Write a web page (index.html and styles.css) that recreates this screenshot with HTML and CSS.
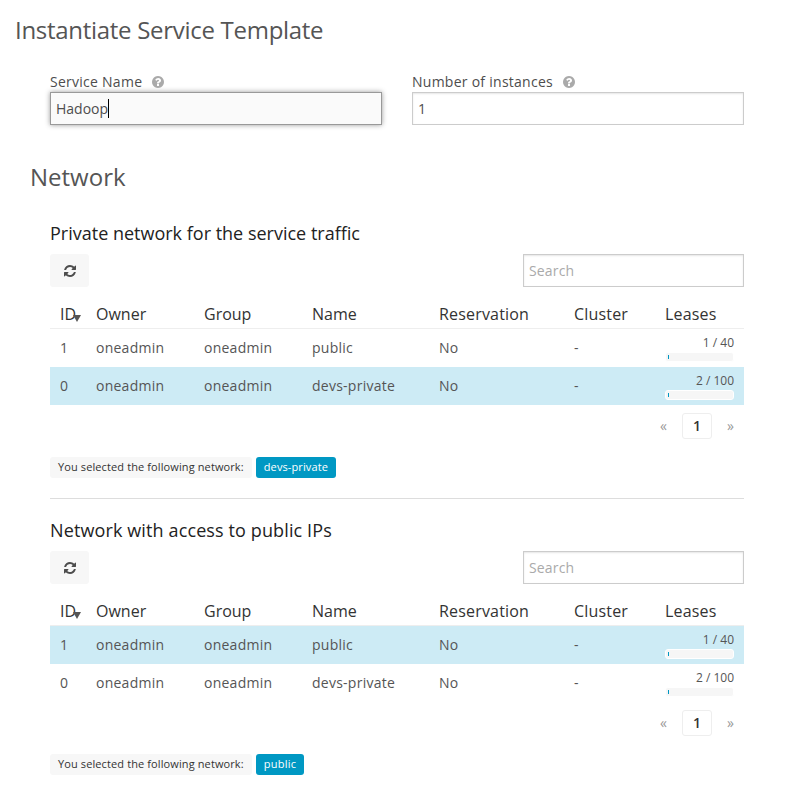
FILE: index.html
```html
<!DOCTYPE html>
<html lang="en">
<head>
<meta charset="utf-8">
<title>Instantiate Service Template</title>
<link rel="stylesheet" href="styles.css">
</head>
<body>
<svg class="sprite" aria-hidden="true">
  <symbol id="refresh" viewBox="0 0 1536 1536"><path d="M1511 928q0 5-1 7-64 268-268 434.500t-478 166.500q-146 0-282.500-55t-243.500-157l-129 129q-19 19-45 19t-45-19-19-45v-448q0-26 19-45t45-19h448q26 0 45 19t19 45-19 45l-137 137q71 66 161 102t187 36q134 0 250-65t186-179q11-17 53-117 8-23 30-23h192q13 0 22.500 9.500t9.500 22.500zm25-800v448q0 26-19 45t-45 19h-448q-26 0-45-19t-19-45 19-45l138-138q-148-137-349-137-134 0-250 65t-186 179q-11 17-53 117-8 23-30 23h-199q-13 0-22.500-9.500t-9.500-22.500v-7q65-268 270-434.500t480-166.500q146 0 284 55.500t245 156.500l130-129q19-19 45-19t45 19 19 45z"/></symbol>
  <symbol id="help" viewBox="128 128 1536 1536"><path d="M1024 1376v-192q0-14-9-23t-23-9h-192q-14 0-23 9t-9 23v192q0 14 9 23t23 9h192q14 0 23-9t9-23zm256-672q0-88-55.500-163t-138.500-116-170-41q-243 0-371 213-15 24 8 42l132 100q7 6 19 6 16 0 25-12 53-68 86-92 34-24 86-24 48 0 85.500 26t37.500 59q0 38-20 61t-68 45q-63 28-115.500 86.500t-52.500 125.500v36q0 14 9 23t23 9h192q14 0 23-9t9-23q0-19 21.500-49.500t54.500-49.500q32-18 49-28.500t46-35 44.500-48 28-60.500 12.500-81zm384 192q0 209-103 385.500t-279.500 279.500-385.500 103-385.500-103-279.500-279.500-103-385.500 103-385.500 279.500-279.500 385.500-103 385.500 103 279.500 279.500 103 385.500z"/></symbol>
</svg>
<h1>Instantiate Service Template</h1>
<form class="fields">
  <div class="field">
    <div class="label">Service Name <svg><use href="#help"/></svg></div>
    <div class="input focused"><span>Hadoop</span><i class="caret"></i></div>
  </div>
  <div class="field">
    <div class="label">Number of instances <svg><use href="#help"/></svg></div>
    <div class="input">1</div>
  </div>
</form>
<h2>Network</h2>
<section>
  <h3>Private network for the service traffic</h3>
  <div class="toolbar">
    <button type="button"><svg><use href="#refresh"/></svg></button>
    <div class="input search">Search</div>
  </div>
  <table>
    <thead><tr><th class="id">ID<i class="sort"></i></th><th class="owner">Owner</th><th class="group">Group</th><th class="name">Name</th><th class="res">Reservation</th><th class="cluster">Cluster</th><th>Leases</th></tr></thead>
    <tbody>
      <tr><td>1</td><td>oneadmin</td><td>oneadmin</td><td>public</td><td>No</td><td>-</td><td class="leases"><div>1 / 40</div><div class="bar"><i></i></div></td></tr>
      <tr class="selected"><td>0</td><td>oneadmin</td><td>oneadmin</td><td>devs-private</td><td>No</td><td>-</td><td class="leases"><div>2 / 100</div><div class="bar"><i></i></div></td></tr>
    </tbody>
  </table>
  <div class="pager"><span>«</span><b>1</b><span>»</span></div>
  <div class="selection"><span class="tag">You selected the following network:</span><span class="tag picked">devs-private</span></div>
</section>
<section class="divided">
  <h3>Network with access to public IPs</h3>
  <div class="toolbar">
    <button type="button"><svg><use href="#refresh"/></svg></button>
    <div class="input search">Search</div>
  </div>
  <table>
    <thead><tr><th class="id">ID<i class="sort"></i></th><th class="owner">Owner</th><th class="group">Group</th><th class="name">Name</th><th class="res">Reservation</th><th class="cluster">Cluster</th><th>Leases</th></tr></thead>
    <tbody>
      <tr class="selected"><td>1</td><td>oneadmin</td><td>oneadmin</td><td>public</td><td>No</td><td>-</td><td class="leases"><div>1 / 40</div><div class="bar"><i></i></div></td></tr>
      <tr><td>0</td><td>oneadmin</td><td>oneadmin</td><td>devs-private</td><td>No</td><td>-</td><td class="leases"><div>2 / 100</div><div class="bar"><i></i></div></td></tr>
    </tbody>
  </table>
  <div class="pager"><span>«</span><b>1</b><span>»</span></div>
  <div class="selection"><span class="tag">You selected the following network:</span><span class="tag picked">public</span></div>
</section>
</body>
</html>
```
FILE: styles.css
```css
* { box-sizing: border-box; }
html { overflow: hidden; }
body {
  margin: 0;
  padding: 13px 51px 0 50px;
  background: #fff;
  color: #4d4d4d;
  font: 14px/20px "Open Sans", sans-serif;
}
.sprite { display: none; }
h1, h2, h3 { margin: 0; font-weight: 400; }
h1 { margin-left: -35px; font-size: 24px; line-height: 34px; letter-spacing: -.29px; color: #555; }
h2 { margin: 35px 0 0 -20px; font-size: 24px; line-height: 34px; color: #555; }
h3 { font-size: 18px; line-height: 26px; color: #222; }
.divided h3 { letter-spacing: .12px; }
.fields { display: flex; gap: 30px; margin-top: 25px; }
.field { width: 332px; }
.label { display: flex; align-items: center; height: 20px; letter-spacing: .26px; white-space: pre; }
.label svg { width: 12px; height: 12px; margin-left: 6px; fill: #aaa; }
.input {
  display: flex;
  align-items: center;
  height: 33px;
  padding: 0 5px;
  border: 1px solid #ccc;
  box-shadow: inset 0 1px 2px rgba(0, 0, 0, .1);
  background: #fff;
}
.focused { border-color: #999; background: #fafafa; box-shadow: 0 0 5px #999; }
.caret { width: 1px; height: 19px; background: #000; }
section { margin-top: 26px; }
.divided { margin-top: 20px; padding-top: 18px; border-top: 1px solid #ddd; }
.toolbar { display: flex; justify-content: space-between; margin-top: 8px; }
button {
  display: flex;
  align-items: center;
  justify-content: center;
  width: 39px;
  height: 33px;
  padding: 0;
  border: 0;
  border-radius: 3px;
  background: #f7f7f7;
}
button svg { width: 12px; height: 12px; fill: #4d4d4d; }
.search { width: 221px; color: #aaa; letter-spacing: .15px; }
table { width: 694px; margin-top: 13px; border-collapse: separate; border-spacing: 0; table-layout: fixed; }
th {
  height: 29px;
  padding: 0 0 1px 10px;
  border-bottom: 1px solid #eee;
  color: #333;
  font-size: 16px;
  font-weight: 400;
  text-align: left;
  white-space: nowrap;
}
.res, .cluster, .cluster + th { letter-spacing: .18px; }
td { height: 38px; padding: 0 0 0 10px; color: #555; letter-spacing: .25px; }
.id { position: relative; width: 36px; }
.owner, .group { width: 108px; }
.name { width: 127px; }
.res { width: 135px; }
.cluster { width: 91px; }
.sort {
  position: absolute;
  left: 23px;
  top: 15px;
  border: 4px solid transparent;
  border-top: 7px solid #555;
  border-bottom: 0;
}
.selected td { background: #cdebf5; }
td.leases { padding: 5px 10px 5px; font-size: 12px; line-height: 18px; letter-spacing: 0; text-align: right; }
.bar { height: 10px; padding: 2px; border: 1px solid #fff; border-radius: 3px; background: #f6f6f6; }
.bar i { display: block; width: 1px; height: 4px; background: #0098c3; }
.pager { display: flex; align-items: center; justify-content: flex-end; height: 26px; margin-top: 8px; padding-right: 10px; color: #999; }
.pager b {
  width: 30px;
  height: 26px;
  margin: 0 15px;
  border: 1px solid #eee;
  border-radius: 3px;
  color: #333;
  font-weight: 600;
  line-height: 24px;
  text-align: center;
}
.selection { display: flex; gap: 4px; margin-top: 18px; }
.tag { height: 21px; padding: 0 8px; border-radius: 3px; background: #f7f7f7; color: #333; font-size: 11px; line-height: 20px; letter-spacing: .11px; }
.picked { background: #0098c3; color: #fff; }
.divided .picked { letter-spacing: .22px; }
```
